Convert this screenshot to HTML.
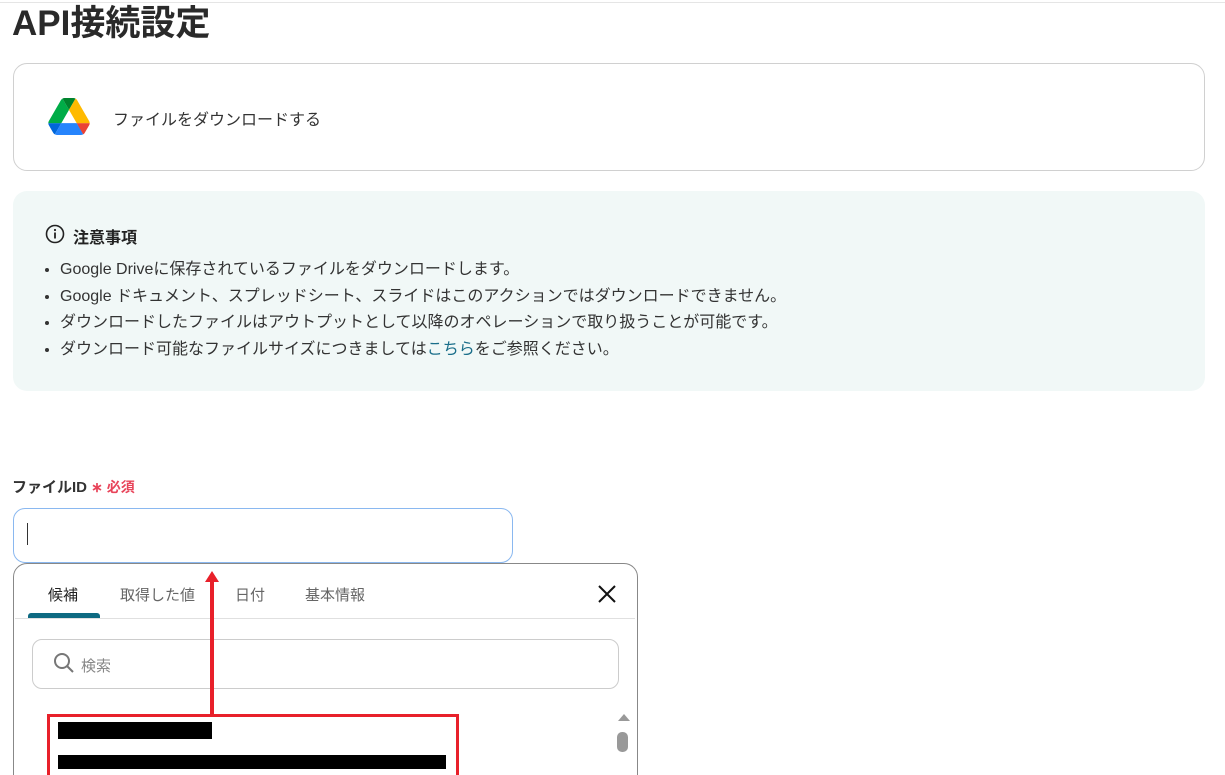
<!DOCTYPE html>
<html><head><meta charset="utf-8"><style>
html,body{margin:0;width:1225px;height:775px;overflow:hidden}
body{background:#fff;font-family:"Liberation Sans","Noto Sans CJK JP",sans-serif;color:#333;position:relative}
.a{position:absolute}
</style></head><body>
<div class="a" style="left:0;top:2px;width:1225px;height:1px;background:#e5e5e5"></div>
<div class="a" style="left:12px;top:2px;font-size:35px;font-weight:bold;color:#2a2a2a;line-height:44px">API接続設定</div>
<div class="a" style="left:13px;top:63px;width:1190px;height:106px;border:1px solid #d0d0d0;border-radius:14px"></div>
<svg class="a" style="left:48px;top:98px" width="42" height="37" viewBox="0 0 87.3 78"><path d="m6.6 66.85 3.850 6.65c.8 1.4 1.95 2.5 3.3 3.3l13.75-23.8h-27.5c0 1.55.4 3.1 1.2 4.5z" fill="#0066da"/><path d="m43.65 25-13.75-23.8c-1.35.8-2.5 1.9-3.3 3.3l-25.4 44a9.06 9.06 0 0 0 -1.2 4.5h27.5z" fill="#00ac47"/><path d="m73.55 76.8c1.35-.8 2.5-1.9 3.3-3.3l1.6-2.75 7.65-13.25c.8-1.4 1.2-2.95 1.2-4.5h-27.502l5.852 11.5z" fill="#ea4335"/><path d="m43.65 25 13.75-23.8c-1.350-.8-2.9-1.2-4.5-1.2h-18.5c-1.6 0-3.15.45-4.5 1.2z" fill="#00832d"/><path d="m59.8 53h-32.3l-13.75 23.8c1.35.8 2.9 1.2 4.5 1.2h50.8c1.6 0 3.15-.45 4.5-1.2z" fill="#2684fc"/><path d="m73.4 26.5-12.7-22c-.8-1.4-1.95-2.5-3.3-3.3l-13.75 23.8 16.15 28h27.45c0-1.55-.4-3.1-1.2-4.5z" fill="#ffba00"/></svg>
<div class="a" style="left:113px;top:106px;font-size:16px;color:#333">ファイルをダウンロードする</div>
<div class="a" style="left:13px;top:191px;width:1192px;height:200px;background:#f1f8f7;border-radius:14px"></div>
<svg class="a" style="left:45px;top:224px" width="20" height="20" viewBox="0 0 20 20"><circle cx="10" cy="10" r="8.5" fill="none" stroke="#222" stroke-width="1.6"/><rect x="9.1" y="8.5" width="1.8" height="6" fill="#222"/><circle cx="10" cy="6" r="1.1" fill="#222"/></svg>
<div class="a" style="left:73px;top:224px;font-size:16px;font-weight:bold;color:#222">注意事項</div>
<ul class="a" style="left:22px;top:257px;margin:0;padding-left:38px;font-size:16px;line-height:26.5px;color:#333">
<li>Google Driveに保存されているファイルをダウンロードします。</li>
<li>Google ドキュメント、スプレッドシート、スライドはこのアクションではダウンロードできません。</li>
<li>ダウンロードしたファイルはアウトプットとして以降のオペレーションで取り扱うことが可能です。</li>
<li>ダウンロード可能なファイルサイズにつきましては<span style="color:#1a6e8a">こちら</span>をご参照ください。</li>
</ul>
<div class="a" style="left:12px;top:476px;font-size:15px;font-weight:bold;color:#333">ファイルID <span style="color:#e8445a;font-size:14px">∗ 必須</span></div>
<div class="a" style="left:13px;top:508px;width:498px;height:53px;border:1px solid #8ab8f0;border-radius:12px"></div>
<div class="a" style="left:27px;top:523px;width:1px;height:22px;background:#333"></div>
<div class="a" style="left:13px;top:563px;width:623px;height:230px;border:1px solid #888;border-radius:14px;background:#fff"></div>
<div class="a" style="left:48px;top:584px;font-size:15px;color:#222">候補</div>
<div class="a" style="left:120px;top:584px;font-size:15px;color:#666">取得した値</div>
<div class="a" style="left:235px;top:584px;font-size:15px;color:#666">日付</div>
<div class="a" style="left:305px;top:584px;font-size:15px;color:#666">基本情報</div>
<div class="a" style="left:28px;top:613px;width:72px;height:5px;background:#0e6a82;border-radius:3px 3px 0 0"></div>
<div class="a" style="left:15px;top:618px;width:620px;height:1px;background:#e0e0e0"></div>
<svg class="a" style="left:597px;top:584px" width="20" height="20"><path d="M2 2L18 18M18 2L2 18" stroke="#111" stroke-width="2"/></svg>
<div class="a" style="left:32px;top:639px;width:585px;height:48px;border:1px solid #ccc;border-radius:10px"></div>
<svg class="a" style="left:53px;top:652px" width="22" height="22"><circle cx="9" cy="9" r="7" fill="none" stroke="#777" stroke-width="2"/><path d="M14 14L20 20" stroke="#777" stroke-width="2"/></svg>
<div class="a" style="left:81px;top:655px;font-size:15px;color:#888">検索</div>
<div class="a" style="left:618px;top:714px;width:0;height:0;border-left:6px solid transparent;border-right:6px solid transparent;border-bottom:7px solid #999"></div>
<div class="a" style="left:617px;top:732px;width:11px;height:20px;background:#999;border-radius:5px"></div>
<div class="a" style="left:58px;top:722px;width:154px;height:17px;background:#000"></div>
<div class="a" style="left:58px;top:755px;width:388px;height:14px;background:#000"></div>
<div class="a" style="left:47px;top:714px;width:406px;height:58px;border:3px solid #e8202a"></div>
<div class="a" style="left:210px;top:580px;width:4px;height:135px;background:#e8202a"></div>
<div class="a" style="left:205px;top:571px;width:0;height:0;border-left:7px solid transparent;border-right:7px solid transparent;border-bottom:11px solid #e8202a"></div>
</body></html>
